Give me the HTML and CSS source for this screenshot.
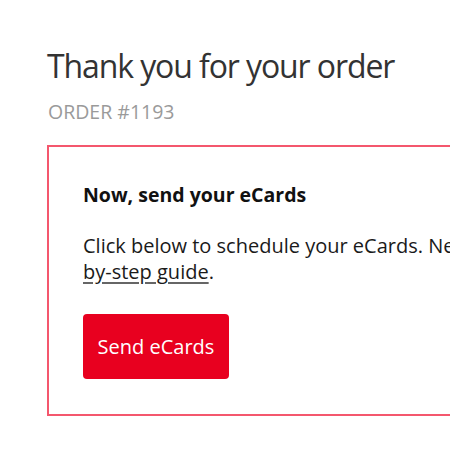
FILE: index.html
```html
<!DOCTYPE html>
<html lang="en">
<head>
<meta charset="utf-8">
<title>Thank you for your order</title>
<link rel="stylesheet" href="styles.css">
</head>
<body>
<main class="page">
  <h1 class="title">Thank you for your order</h1>
  <p class="order-number">ORDER #1193</p>
  <section class="card">
    <h2 class="card-title">Now, send your eCards</h2>
    <p class="card-text">Click below to schedule your eCards. Need help? Read our <a class="link" href="#">step-<br>by-step guide</a>.</p>
    <a class="button" href="#">Send eCards</a>
  </section>
</main>
</body>
</html>
```

FILE: styles.css
```css
html, body {
  margin: 0;
  padding: 0;
  background: #ffffff;
  overflow: hidden;
}

body {
  font-family: "Open Sans", "Noto Sans", sans-serif;
  color: #1a1a1a;
}

.page {
  padding: 44px 0 0 47px;
}

.title {
  margin: 0;
  font-size: 32px;
  font-weight: 400;
  line-height: 44px;
  letter-spacing: -1.1px;
  color: #333333;
}

.order-number {
  margin: 11px 0 0 1px;
  font-size: 19.5px;
  line-height: 26px;
  color: #9a9a9a;
}

.card {
  margin-top: 20px;
  width: 720px;
  border: 2px solid #f4576d;
  padding: 35px 33px 35px 34px;
}

.card-title {
  margin: 0;
  font-size: 19.5px;
  font-weight: 700;
  line-height: 26px;
  color: #111111;
}

.card-text {
  margin: 25px 0 0;
  font-size: 20px;
  line-height: 26px;
  color: #1a1a1a;
  white-space: nowrap;
}

.link {
  color: inherit;
  text-decoration: underline;
  text-decoration-color: #666666;
  text-underline-offset: 3px;
}

.button {
  display: flex;
  align-items: center;
  justify-content: center;
  margin-top: 29px;
  width: 146px;
  height: 65px;
  background: #e8001f;
  border-radius: 4px;
  color: #ffffff;
  font-size: 20px;
  text-decoration: none;
}
```
